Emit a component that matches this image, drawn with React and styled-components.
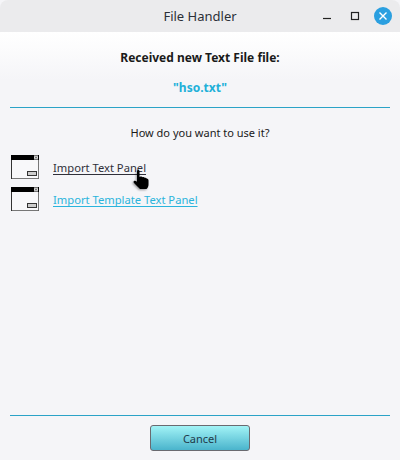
import React from "react";
import styled, { createGlobalStyle } from "styled-components";

const Global = createGlobalStyle`
  html, body {
    margin: 0;
    padding: 0;
    background: #f5f5f8;
  }
  * {
    box-sizing: border-box;
  }
`;

const Win = styled.div`
  width: 400px;
  height: 460px;
  display: flex;
  flex-direction: column;
  font-family: "Noto Sans", "Open Sans", sans-serif;
  font-size: 12px;
  color: #1a1a1a;
  background: #f5f5f8;
`;

const TitleBar = styled.div`
  height: 32px;
  flex: none;
  display: grid;
  grid-template-columns: 1fr auto 1fr;
  align-items: center;
  background: #ebebed;
  border-radius: 8px 8px 0 0;
`;

const Title = styled.div`
  grid-column: 2;
  font-size: 13px;
  color: #2c3038;
`;

const Controls = styled.div`
  grid-column: 3;
  display: flex;
  align-items: center;
  justify-content: flex-end;
  padding-right: 3px;
`;

const CtlBox = styled.div`
  width: 28px;
  display: flex;
  justify-content: center;
`;

const Ctl = styled.svg`
  display: block;
  width: ${(p) => p.$size}px;
  height: ${(p) => p.$size}px;
`;

const Body = styled.div`
  flex: 1;
  display: flex;
  flex-direction: column;
  padding: 0 10px;
  background: linear-gradient(#ffffff 0, #f5f5f8 48px);
`;

const Heading = styled.div`
  margin-top: 17px;
  height: 17px;
  line-height: 17px;
  text-align: center;
  font-weight: 700;
`;

const FileName = styled.div`
  margin-top: 13px;
  height: 17px;
  line-height: 17px;
  text-align: center;
  font-weight: 700;
  color: #22b0d8;
`;

const Rule = styled.hr`
  margin: 0;
  border: 0;
  height: 1px;
  background: #2ba3c7;
`;

const TopRule = styled(Rule)`
  margin-top: 11px;
`;

const Question = styled.div`
  margin-top: 16px;
  height: 17px;
  line-height: 17px;
  text-align: center;
  font-size: 11px;
`;

const Options = styled.div`
  margin-top: 12px;
  flex: 1;
  display: flex;
  flex-direction: column;
  gap: 4px;
`;

const Option = styled.div`
  position: relative;
  height: 28px;
  display: flex;
  align-items: center;
  gap: 14px;
  padding-left: 1px;
`;

const OptionLink = styled.a`
  font-size: 11.2px;
  color: ${(p) => (p.$hover ? "#30303a" : "#2ab4dc")};
  text-decoration: underline;
  text-decoration-skip-ink: none;
  text-underline-offset: 2px;
`;

const Hand = styled.svg`
  position: absolute;
  left: 122px;
  top: 16px;
  width: 20px;
  height: 22px;
  filter: drop-shadow(-1px 1px 1px rgba(0, 0, 0, 0.4));
`;

const Footer = styled.div`
  height: 44px;
  flex: none;
  display: flex;
  justify-content: center;
  padding-top: 9px;
`;

const CancelBtn = styled.button`
  width: 100px;
  height: 26px;
  padding: 0;
  font: inherit;
  font-size: 11px;
  color: #1f3a4a;
  border: 1px solid #6a6a70;
  border-radius: 3px;
  background: linear-gradient(#a2f3f6, #4ab4cc);
`;

function PanelIcon() {
  return (
    <svg width="28" height="24" viewBox="0 0 28 24" style={{ flex: "none" }}>
      <rect x="0.5" y="0.5" width="27" height="23" fill="#f8f8fa" stroke="#333" />
      <path d="M27.5 1v22.5H1" fill="none" stroke="#777" />
      <rect x="0" y="0" width="28" height="5" fill="#000" />
      <rect x="23" y="0.5" width="4" height="4" fill="#ddd" />
      <path d="M24 1.5l2 2M26 1.5l-2 2" stroke="#333" strokeWidth="0.7" />
      <rect x="16.5" y="16.5" width="9" height="4" fill="#ccc" stroke="#333" />
    </svg>
  );
}

export default function App() {
  return (
    <Win>
      <Global />
      <TitleBar>
        <Title>File Handler</Title>
        <Controls>
          <CtlBox>
            <Ctl $size={10} viewBox="0 0 10 10">
              <path d="M1 7.5h8" stroke="#222" strokeWidth="1.2" />
            </Ctl>
          </CtlBox>
          <CtlBox>
            <Ctl $size={10} viewBox="0 0 10 10">
              <rect x="1.5" y="1.5" width="7" height="7" fill="none" stroke="#222" strokeWidth="1.2" />
            </Ctl>
          </CtlBox>
          <CtlBox>
            <Ctl $size={18} viewBox="0 0 18 18">
              <circle cx="9" cy="9" r="9" fill="#2a9fe0" />
              <path d="M5.5 5.5l7 7M12.5 5.5l-7 7" stroke="#fff" strokeWidth="1.4" />
            </Ctl>
          </CtlBox>
        </Controls>
      </TitleBar>
      <Body>
        <Heading>Received new Text File file:</Heading>
        <FileName>"hso.txt"</FileName>
        <TopRule />
        <Question>How do you want to use it?</Question>
        <Options>
          <Option>
            <PanelIcon />
            <OptionLink $hover>Import Text Panel</OptionLink>
            <Hand viewBox="0 0 20 22">
              <path
                d="M5 1.5c1-1 2.5-.5 2.5 1V8l1-.5c1-.3 1.7 0 2 .7 1-.4 1.8-.1 2.2.6 1-.3 1.8.1 2.2 1 1 0 1.6.6 1.6 1.7v4c0 2-1 3.5-2 4.5H8L2 14c-.8-1-.5-2 .5-2.3.8-.2 1.5.1 2.5 1V1.5z"
                fill="#000"
              />
            </Hand>
          </Option>
          <Option>
            <PanelIcon />
            <OptionLink>Import Template Text Panel</OptionLink>
          </Option>
        </Options>
        <Rule />
        <Footer>
          <CancelBtn>Cancel</CancelBtn>
        </Footer>
      </Body>
    </Win>
  );
}
